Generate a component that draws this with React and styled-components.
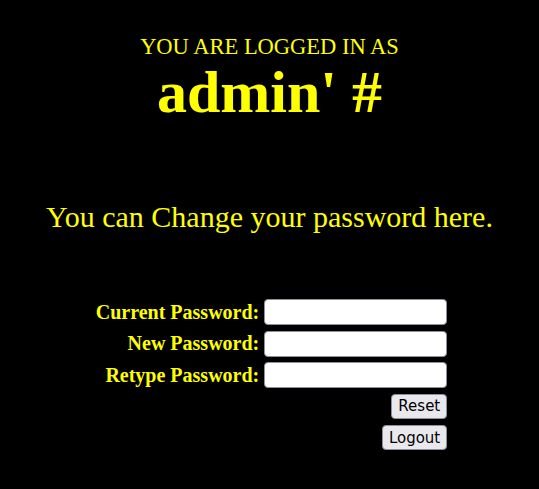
import React from 'react';
import styled, { createGlobalStyle } from 'styled-components';

const GlobalStyle = createGlobalStyle`
  html, body {
    margin: 0;
    background: #000;
  }
  body {
    font-family: "Liberation Serif", "Times New Roman", serif;
    color: #ffff00;
  }
`;

const Page = styled.div`
  min-height: 489px;
  display: flex;
  flex-direction: column;
  align-items: center;
  padding-top: 34px;
  box-sizing: border-box;
`;

const Intro = styled.div`
  font-size: 22.5px;
  line-height: 26px;
  text-transform: uppercase;
`;

const UserName = styled.div`
  font-size: 60px;
  font-weight: bold;
  line-height: 64px;
`;

const Hint = styled.div`
  font-size: 30px;
  line-height: 34px;
  margin-top: 76px;
`;

const Form = styled.form`
  display: grid;
  grid-template-columns: auto 183px;
  column-gap: 5px;
  row-gap: 5.5px;
  align-items: center;
  margin-top: 65px;
  margin-left: 4px;
`;

const Label = styled.label`
  font-size: 20px;
  font-weight: bold;
  text-align: right;
`;

const Input = styled.input`
  width: 183px;
  height: 26px;
  box-sizing: border-box;
  border: 1px solid #8f8f9d;
  border-radius: 4px;
  background: #fff;
  padding: 2px 4px;
`;

const Button = styled.button`
  grid-column: 2;
  justify-self: end;
  height: 25px;
  padding: 0 6px;
  margin-top: ${(p) => (p.$spaced ? '1px' : '0')};
  font-family: "DejaVu Sans", Tahoma, sans-serif;
  font-size: 15px;
  color: #000;
  background: #e9e9ed;
  border: 1px solid #8f8f9d;
  border-radius: 4px;
`;

export default function App() {
  return (
    <>
      <GlobalStyle />
      <Page>
        <Intro>You are logged in as</Intro>
        <UserName>admin' #</UserName>
        <Hint>You can Change your password here.</Hint>
        <Form onSubmit={(e) => e.preventDefault()}>
          <Label htmlFor="current">Current Password:</Label>
          <Input id="current" type="password" />
          <Label htmlFor="new">New Password:</Label>
          <Input id="new" type="password" />
          <Label htmlFor="retype">Retype Password:</Label>
          <Input id="retype" type="password" />
          <Button type="reset">Reset</Button>
          <Button type="button" $spaced>Logout</Button>
        </Form>
      </Page>
    </>
  );
}
